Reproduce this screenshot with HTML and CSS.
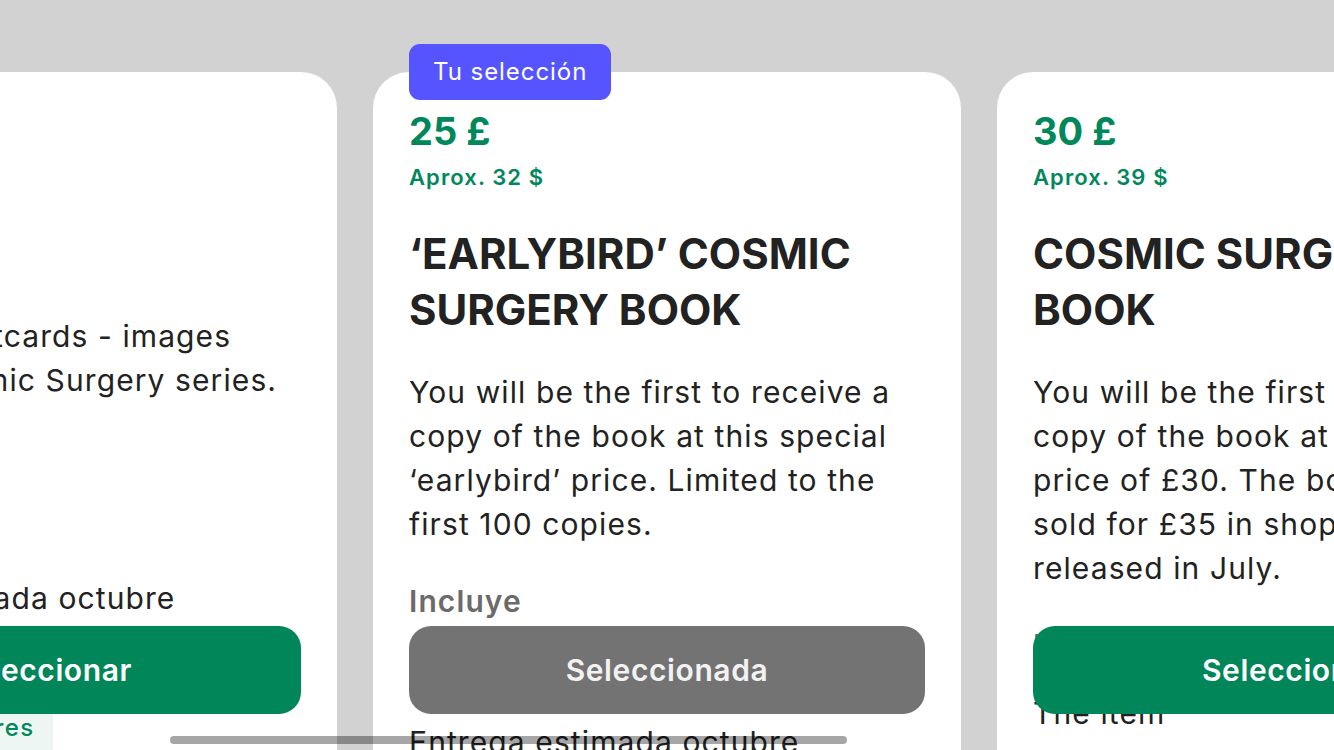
FILE: index.html
```html
<!DOCTYPE html>
<html lang="es">
<head>
<meta charset="utf-8">
<title>Recompensas</title>
<link rel="stylesheet" href="styles.css">
</head>
<body>
<main class="carousel">
  <article class="card">
    <div class="price">15 £</div>
    <div class="approx">Aprox. 19 $</div>
    <h2 class="title">PRINTS</h2>
    <p class="desc">Set of six postcards - images<br>from the Cosmic Surgery series.</p>
    <h3 class="includes">Incluye</h3>
    <ul class="items"><li>Cards</li></ul>
    <p class="delivery">Entrega estimada octubre</p>
    <div class="backers">37 patrocinadores</div>
    <button class="cta">Seleccionar</button>
  </article>

  <article class="card">
    <div class="badge">Tu selección</div>
    <div class="price">25 £</div>
    <div class="approx">Aprox. 32 $</div>
    <h2 class="title">‘EARLYBIRD’ COSMIC SURGERY BOOK</h2>
    <p class="desc">You will be the first to receive a copy of the book at this special ‘earlybird’ price. Limited to the first 100 copies.</p>
    <h3 class="includes">Incluye</h3>
    <ul class="items"><li>The item</li></ul>
    <p class="delivery">Entrega estimada octubre</p>
    <button class="cta cta-selected">Seleccionada</button>
  </article>

  <article class="card">
    <div class="price">30 £</div>
    <div class="approx">Aprox. 39 $</div>
    <h2 class="title">COSMIC SURGERY BOOK</h2>
    <p class="desc">You will be the first to receive a copy of the book at the special price of £30. The book will be<br>sold for £35 in shops when it is released in July.</p>
    <h3 class="includes">Incluye</h3>
    <ul class="items"><li>The item</li></ul>
    <p class="delivery">Entrega estimada octubre</p>
    <button class="cta">Seleccionar</button>
  </article>
</main>
<div class="home-indicator"></div>
</body>
</html>
```

FILE: styles.css
```css
* { box-sizing: border-box; }

html, body {
  margin: 0;
  padding: 0;
  width: 1334px;
  height: 750px;
  overflow: hidden;
}

body {
  background: #d2d2d2;
  font-family: Inter, "Noto Sans", "Liberation Sans", sans-serif;
  color: #222222;
  position: relative;
}

.carousel {
  display: flex;
  gap: 36px;
  padding-top: 72px;
  margin-left: -251px;
}

.card {
  position: relative;
  flex: 0 0 588px;
  height: 900px;
  background: #ffffff;
  border-radius: 36px;
  padding: 36px 36px 0;
  display: flex;
  flex-direction: column;
}

.badge {
  position: absolute;
  top: -28px;
  left: 36px;
  height: 56px;
  padding: 0 24px;
  background: #5654ff;
  color: #ffffff;
  border-radius: 11px;
  font-size: 24px;
  line-height: 56px;
  letter-spacing: 0.95px;
}

.price {
  color: #00875a;
  font-size: 38px;
  font-weight: 700;
  line-height: 46px;
}

.approx {
  margin-top: 9px;
  color: #00875a;
  font-size: 22px;
  font-weight: 600;
  line-height: 28px;
  letter-spacing: 1.1px;
}

.title {
  margin: 35px 0 0;
  max-width: 470px;
  font-size: 42px;
  font-weight: 700;
  line-height: 56px;
  color: #222222;
}

.desc {
  margin: 32px 0 0;
  font-size: 30px;
  line-height: 44px;
  letter-spacing: 1.1px;
  color: #222222;
}

.includes {
  margin: 33px 0 0;
  font-size: 30px;
  font-weight: 600;
  line-height: 44px;
  letter-spacing: 1.1px;
  color: #6b6b6b;
}

.items {
  list-style: none;
  margin: 24px 0 0;
  padding: 0;
  font-size: 30px;
  line-height: 44px;
  letter-spacing: 1.1px;
}

.delivery {
  margin: 29px 0 0;
  font-size: 30px;
  line-height: 44px;
  letter-spacing: 1.1px;
}

.backers {
  align-self: flex-start;
  margin-top: 84px;
  padding: 8px 19px 8px 18px;
  background: #edf6f2;
  color: #00875a;
  font-size: 24px;
  font-weight: 500;
  line-height: 32px;
  letter-spacing: 1.35px;
}

.cta {
  position: absolute;
  top: 554px;
  left: 36px;
  right: 36px;
  height: 88px;
  border: none;
  border-radius: 22px;
  background: #008659;
  color: #ffffff;
  font-family: inherit;
  font-size: 30px;
  font-weight: 600;
  letter-spacing: 0.6px;
  cursor: pointer;
}

.cta-selected {
  background: #737373;
  color: #f2f2f2;
}

.home-indicator {
  position: absolute;
  left: 170px;
  top: 736px;
  width: 677px;
  height: 8px;
  border-radius: 4px;
  background: rgba(0, 0, 0, 0.35);
}
```
